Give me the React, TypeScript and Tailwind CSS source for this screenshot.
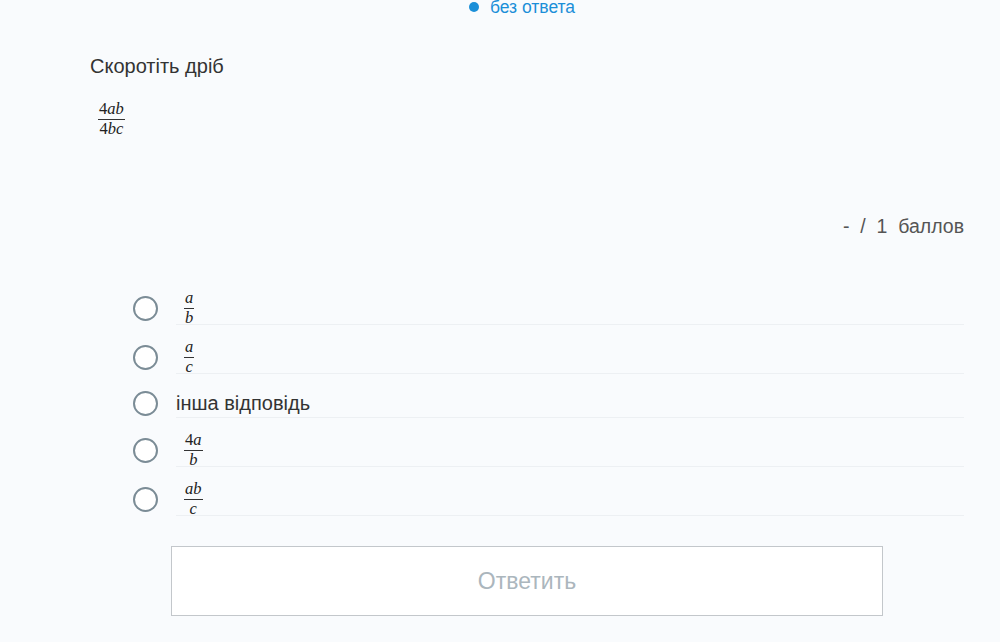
import React from 'react';

type FracProps = { num: React.ReactNode; den: React.ReactNode };

const Frac: React.FC<FracProps> = ({ num, den }) => (
  <span className="inline-flex flex-col items-center px-[2px] font-['Liberation_Serif',serif] text-[16.5px] leading-[16px] text-[#222]">
    <span className="px-[1px] pb-[2px]">{num}</span>
    <span className="w-full border-t border-[#333]"></span>
    <span className="px-[1px] pt-[1px]">{den}</span>
  </span>
);

const I: React.FC<{ children: React.ReactNode }> = ({ children }) => <i className="italic">{children}</i>;

const options: { id: number; label: React.ReactNode; text?: boolean }[] = [
  { id: 1, label: <Frac num={<I>a</I>} den={<I>b</I>} /> },
  { id: 2, label: <Frac num={<I>a</I>} den={<I>c</I>} /> },
  { id: 3, label: 'інша відповідь', text: true },
  { id: 4, label: <Frac num={<>4<I>a</I></>} den={<I>b</I>} /> },
  { id: 5, label: <Frac num={<I>ab</I>} den={<I>c</I>} /> },
];

export default function App() {
  return (
    <div className="min-h-[642px] w-full bg-[#f9fbfd] font-['Liberation_Sans',Arial,sans-serif] text-[#333]">
      {/* status */}
      <div className="flex h-[14px] items-center justify-center gap-[11px] pl-[44px]">
        <span className="h-[10px] w-[10px] rounded-full bg-[#1b8fd8]"></span>
        <span className="text-[17.5px] leading-[16px] text-[#1b8fd8]">без ответа</span>
      </div>

      {/* question */}
      <div className="pl-[90px] pt-[40px]">
        <div className="text-[20px] leading-[24px] text-[#333]">Скоротіть дріб</div>
        <div className="pl-[6px] pt-[19px]">
          <Frac num={<>4<I>ab</I></>} den={<>4<I>bc</I></>} />
        </div>
      </div>

      {/* points */}
      <div className="flex justify-end pr-[36px] pt-[77px] text-[19.5px] leading-[24px] text-[#555]">
        <span className="whitespace-pre">-  /  1  баллов</span>
      </div>

      {/* options */}
      <div className="flex flex-col gap-[15px] pl-[133px] pr-[36px] pt-[53px]">
        {options.map((o) => (
          <div key={o.id} className="flex items-center">
            <span className="h-[25px] w-[25px] shrink-0 rounded-full border-[2.5px] border-[#7b8c96] bg-white"></span>
            <div
              className={
                'ml-[18px] flex flex-1 items-center border-b border-[#edf0f3] ' +
                (o.text ? 'h-[29px] text-[20px] text-[#333]' : 'h-[34px] pl-[6px]')
              }
            >
              {o.label}
            </div>
          </div>
        ))}
      </div>

      {/* submit */}
      <div className="pl-[171px] pr-[117px] pt-[30px]">
        <button className="flex h-[70px] w-full items-center justify-center border border-[#c3c7cb] bg-white text-[23px] text-[#abb6bd]">
          Ответить
        </button>
      </div>
    </div>
  );
}
